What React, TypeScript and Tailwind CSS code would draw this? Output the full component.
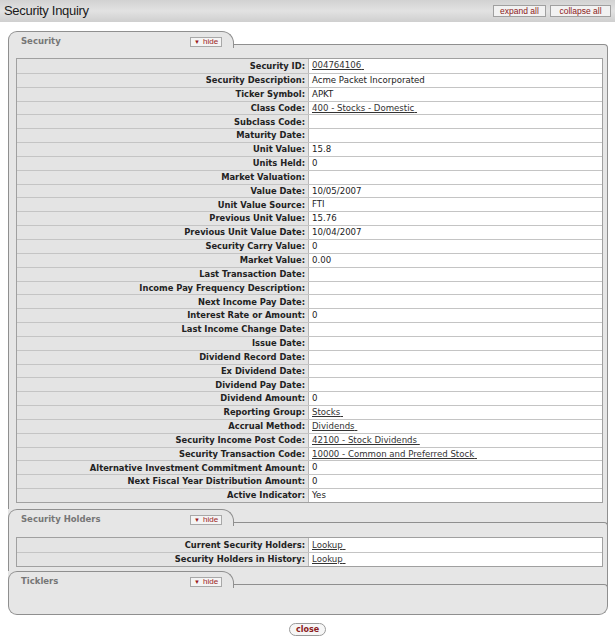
import React from "react";

type Row = { label: string; value?: string; link?: boolean };

const securityRows: Row[] = [
  { label: "Security ID", value: "004764106", link: true },
  { label: "Security Description", value: "Acme Packet Incorporated" },
  { label: "Ticker Symbol", value: "APKT" },
  { label: "Class Code", value: "400 - Stocks - Domestic", link: true },
  { label: "Subclass Code" },
  { label: "Maturity Date" },
  { label: "Unit Value", value: "15.8" },
  { label: "Units Held", value: "0" },
  { label: "Market Valuation" },
  { label: "Value Date", value: "10/05/2007" },
  { label: "Unit Value Source", value: "FTI" },
  { label: "Previous Unit Value", value: "15.76" },
  { label: "Previous Unit Value Date", value: "10/04/2007" },
  { label: "Security Carry Value", value: "0" },
  { label: "Market Value", value: "0.00" },
  { label: "Last Transaction Date" },
  { label: "Income Pay Frequency Description" },
  { label: "Next Income Pay Date" },
  { label: "Interest Rate or Amount", value: "0" },
  { label: "Last Income Change Date" },
  { label: "Issue Date" },
  { label: "Dividend Record Date" },
  { label: "Ex Dividend Date" },
  { label: "Dividend Pay Date" },
  { label: "Dividend Amount", value: "0" },
  { label: "Reporting Group", value: "Stocks", link: true },
  { label: "Accrual Method", value: "Dividends", link: true },
  { label: "Security Income Post Code", value: "42100 - Stock Dividends", link: true },
  { label: "Security Transaction Code", value: "10000 - Common and Preferred Stock", link: true },
  { label: "Alternative Investment Commitment Amount", value: "0" },
  { label: "Next Fiscal Year Distribution Amount", value: "0" },
  { label: "Active Indicator", value: "Yes" },
];

const holderRows: Row[] = [
  { label: "Current Security Holders", value: "Lookup", link: true },
  { label: "Security Holders in History", value: "Lookup", link: true },
];

function HideButton() {
  return (
    <span className="flex items-center gap-[3px] h-[10px] px-[3px] border border-[#a8a8a8] bg-[#f4f4f4] text-[#9b1c1c] text-[8px] leading-none font-['Liberation_Sans',sans-serif]">
      <span className="text-[6px]">▼</span>hide
    </span>
  );
}

function TabHeader({ title, first }: { title: string; first?: boolean }) {
  return (
    <div className={`flex items-end ${first ? "bg-white" : "bg-[#e6e6e6] border-r border-[#8f8f8f]"}`}>
      <div className="w-[226px] h-[17px] border border-b-0 border-[#8f8f8f] rounded-tl-[9px] rounded-tr-[12px] bg-[#e6e6e6] flex items-center pl-[12px] pt-[3px]">
        <span className="w-[169px] text-[8.5px] font-bold text-[#767676] font-['DejaVu_Sans',sans-serif]">{title}</span>
        <HideButton />
      </div>
      <div
        className={`flex-1 h-[4px] border-t border-r border-[#8f8f8f] rounded-tr-[8px] bg-[#e6e6e6] ${first ? "" : "-mr-px"}`}
      ></div>
    </div>
  );
}

function DataTable({ rows, rowH }: { rows: Row[]; rowH: string }) {
  return (
    <div className="border border-[#a0a0a0] bg-white font-['DejaVu_Sans',sans-serif]">
      {rows.map((r, i) => (
        <div
          key={r.label}
          className={`flex ${rowH} ${i > 0 ? "border-t border-[#c4c4c4]" : ""}`}
        >
          <div className="w-[292px] shrink-0 bg-[#e4e4e4] border-r border-[#b8b8b8] text-right pr-[3px] font-bold text-[8.35px] text-[#222] flex items-center justify-end whitespace-nowrap">
            {r.label}:
          </div>
          <div className="flex-1 flex items-center pl-[3px] text-[8.6px] text-[#222] whitespace-nowrap">
            {r.value &&
              (r.link ? (
                <span className="underline text-[#333]">{r.value}&nbsp;</span>
              ) : (
                r.value
              ))}
          </div>
        </div>
      ))}
    </div>
  );
}

export default function App() {
  return (
    <div className="w-[615px] h-[638px] bg-white overflow-hidden relative">
      <div className="h-[22px] bg-gradient-to-b from-[#d2d2d2] via-[#e2e2e2] to-[#cfcfcf] flex items-center justify-between pl-[4px] pr-[4px]">
        <h1 className="text-[13px] text-[#1a1a1a] font-['Liberation_Sans',sans-serif] tracking-[-0.3px]">
          Security Inquiry
        </h1>
        <div className="flex gap-[4px]">
          <button className="h-[12px] w-[53px] border border-[#a0a0a0] bg-[#f2f2f2] text-[#8b2020] text-[8.5px] leading-none font-['Liberation_Sans',sans-serif]">
            expand all
          </button>
          <button className="h-[12px] w-[61px] border border-[#a0a0a0] bg-[#f2f2f2] text-[#8b2020] text-[8.5px] leading-none font-['Liberation_Sans',sans-serif]">
            collapse all
          </button>
        </div>
      </div>

      <div className="ml-[8px] mr-[7px] mt-[9px]">
        <TabHeader title="Security" first />
        <div className="border-x border-[#8f8f8f] bg-[#e6e6e6] pt-[10px] pb-[6px] pl-[7px] pr-[4px]">
          <DataTable rows={securityRows} rowH="h-[13.85px]" />
        </div>

        <TabHeader title="Security Holders" />
        <div className="border-x border-[#8f8f8f] bg-[#e6e6e6] pt-[11px] pb-[4px] pl-[7px] pr-[4px]">
          <DataTable rows={holderRows} rowH="h-[14px]" />
        </div>

        <TabHeader title="Ticklers" />
        <div className="border-x border-b border-[#8f8f8f] rounded-b-[9px] bg-[#e6e6e6] h-[27px]"></div>
      </div>

      <div className="flex justify-center mt-[8px]">
        <button className="h-[13px] px-[6px] rounded-full border border-[#9a9a9a] bg-[#f6f6f6] text-[#8b2020] text-[8px] font-bold leading-none font-['DejaVu_Sans',sans-serif]">
          close
        </button>
      </div>
    </div>
  );
}
